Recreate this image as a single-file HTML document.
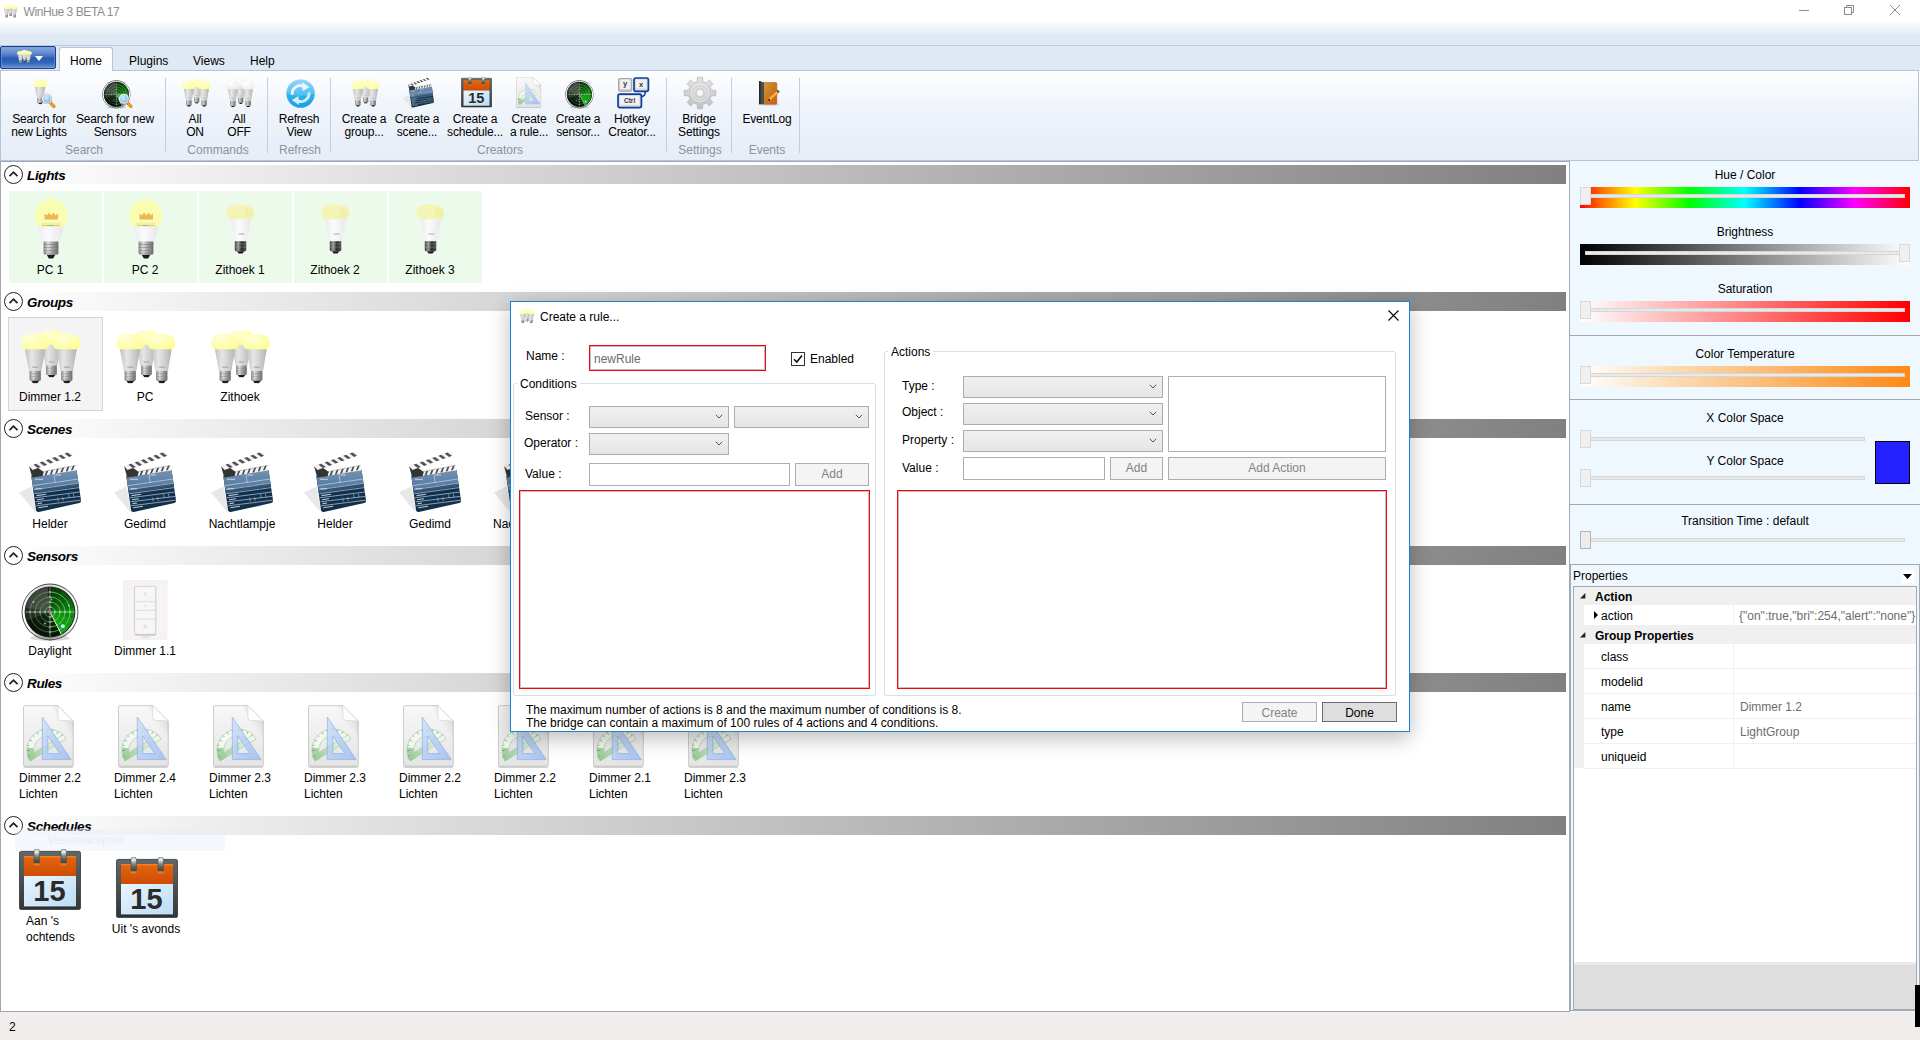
<!DOCTYPE html>
<html lang="en">
<head>
<meta charset="utf-8">
<title>WinHue 3 BETA 17</title>
<style>
*{box-sizing:border-box;margin:0;padding:0}
html,body{width:1920px;height:1040px;overflow:hidden;background:#fff}
body{font-family:"Liberation Sans",sans-serif;font-size:12px;color:#000;position:relative}
.a{position:absolute}
.t{position:absolute;white-space:nowrap;line-height:16px;font-size:12px}
.c{text-align:center}
svg{position:absolute;overflow:visible}
/* title + ribbon */
#titlebar{left:0;top:0;width:1920px;height:46px;background:linear-gradient(#fff 0,#fff 20px,#dfe9f5 36px,#dfe9f5 46px)}
#tabrow{left:0;top:45px;width:1920px;height:26px;background:#dfe9f5;border-top:1px solid #b9c9de}
#ribbon{left:0;top:70px;width:1919px;height:91px;border:1px solid #b4c4da;background:linear-gradient(#fdfeff 0,#f0f4fb 40%,#e6edf7 100%)}
#appbtn{left:0;top:46px;width:56px;height:23px;border:1px solid #1b3f8a;border-radius:2px;background:linear-gradient(#86a6dc 0,#6c93d2 22%,#4273c4 45%,#2c5cb4 52%,#3065bc 75%,#6f95ce 100%);box-shadow:inset 0 0 0 1px rgba(120,160,220,.5)}
#hometab{left:59px;top:47px;width:54px;height:24px;border:1px solid #b4c4da;border-bottom:none;border-radius:3px 3px 0 0;background:linear-gradient(#fff,#fbfcfe)}
.rsep{position:absolute;top:78px;width:1px;height:75px;background:#c3cfe0}
.rl{position:absolute;white-space:nowrap;line-height:13px;font-size:12px;text-align:center;top:113px;transform:translateX(-50%);letter-spacing:-.2px}
.gl{position:absolute;white-space:nowrap;line-height:16px;font-size:12px;color:#8b929c;top:142px;transform:translateX(-50%)}
/* left panel */
#left{left:0;top:161px;width:1570px;height:851px;border:1px solid #a3a7b2;background:#fff}
.hdr{position:absolute;left:2px;width:1564px;height:19px;background:linear-gradient(90deg,#fff 0,#808080 100%)}
.hc{position:absolute;left:4px;width:19px;height:19px;border:1px solid #222;border-radius:50%;background:#fff}
.ht{position:absolute;left:27px;font-weight:bold;font-style:italic;font-size:13.5px;letter-spacing:-.35px;line-height:19px;white-space:nowrap;margin-top:1px}
.tile{position:absolute;width:93px;height:92px;top:191px;background:#ebfaeb}
.il{position:absolute;white-space:nowrap;line-height:16px;font-size:12px;transform:translateX(-50%);text-align:center}
/* right panel */
#right{left:1570px;top:161px;width:350px;height:851px;background:#f0f8ff}
.sl{position:absolute;left:1570px;width:350px;text-align:center;line-height:16px;font-size:12px}
.bar{position:absolute;left:1580px;width:330px;height:21px}
.trk{position:absolute;height:4px;background:#e7eaea;border:1px solid #d6d6d6}
.thumb{position:absolute;width:11px;height:18px;background:#f0f0f0;border:1px solid #d9d9d9}
.div{position:absolute;left:1570px;width:350px;height:1px;background:#a5a8ad}
.pr{position:absolute;left:1584px;width:332px;height:25px;background:#fff;border-bottom:1px solid #f0f0f0}
.pn{position:absolute;left:1601px;line-height:16px;font-size:12px;white-space:nowrap}
.pv{position:absolute;left:1740px;line-height:16px;font-size:12px;white-space:nowrap;color:#6d6d6d}
/* dialog */
#dlg{left:510px;top:301px;width:900px;height:431px;background:#fff;border:1px solid #1883d7;box-shadow:0 6px 20px rgba(0,0,0,.27)}
.gb{position:absolute;border:1px solid #d5dfe5;border-radius:2.5px}
.gbl{position:absolute;background:#fff;padding:0 3px;line-height:16px;font-size:12px;white-space:nowrap}
.cb{position:absolute;height:22px;border:1px solid #adadad;background:linear-gradient(#f0f0f0,#e5e5e5)}
.tb{position:absolute;border:1px solid #abadb3;background:#fff}
.btn{position:absolute;border:1px solid #adadad;background:#f4f4f4;color:#838383;text-align:center;font-size:12px;line-height:21px}
.red{position:absolute;border:1px solid #f00;background:#fff;box-shadow:inset 0 0 0 1px #b5c6cc}
</style>
</head>
<body>
<!--DEFS-->
<svg width="0" height="0" style="left:0;top:0">
<defs>
<linearGradient id="gBody" x1="0" x2="1"><stop offset="0" stop-color="#c0c0c0"/><stop offset=".35" stop-color="#e6e6e6"/><stop offset=".6" stop-color="#d4d4d4"/><stop offset="1" stop-color="#b2b2b2"/></linearGradient>
<linearGradient id="gBodyW" x1="0" x2="1"><stop offset="0" stop-color="#ececf0"/><stop offset=".4" stop-color="#fbfbfd"/><stop offset="1" stop-color="#e6e6ec"/></linearGradient>
<linearGradient id="gScrew" x1="0" x2="1"><stop offset="0" stop-color="#858585"/><stop offset=".3" stop-color="#e0e0e0"/><stop offset=".6" stop-color="#a4a4a4"/><stop offset="1" stop-color="#6e6e6e"/></linearGradient>
<linearGradient id="gScrewD" x1="0" x2="1"><stop offset="0" stop-color="#3c3c3c"/><stop offset=".3" stop-color="#9a9a9a"/><stop offset=".6" stop-color="#2a2a2a"/><stop offset="1" stop-color="#555"/></linearGradient>
<radialGradient id="gDome" cx=".35" cy=".3" r=".8"><stop offset="0" stop-color="#ffffd6"/><stop offset="1" stop-color="#fdfd96"/></radialGradient>
<radialGradient id="gDomeW" cx=".35" cy=".3" r=".8"><stop offset="0" stop-color="#fff"/><stop offset="1" stop-color="#ececec"/></radialGradient>
<symbol id="hb" viewBox="0 -1 28 50">
<path d="M3.7 14 L24.3 14 L20.3 36.6 L8 36.6Z" fill="url(#gBody)"/>
<path d="M8.6 36.4H19.8V45.2Q19.8 46.3 18.6 46.3H9.8Q8.6 46.3 8.6 45.2Z" fill="url(#gScrew)"/>
<path d="M8.6 39.2H19.8M8.6 42H19.8M8.6 44.6H19.8" stroke="#777" stroke-width=".6" opacity=".6"/>
<path d="M10.3 46.2H18.2L16.4 48.7H12.1Z" fill="#1c1c1c"/>
<path d="M11.3 32.6H17.2" stroke="#999" stroke-width=".9"/>
<path class="dm" d="M.3 8.6C.3 2.2 5 -.7 14 -.7S27.7 2.2 27.7 8.6C27.7 11.4 26.4 13.6 24.3 14.6L3.7 14.6C1.6 13.6 .3 11.4 .3 8.6Z" fill="url(#gDome)"/>
</symbol>
<symbol id="hbw" viewBox="0 -1 28 50">
<path d="M3.7 14 L24.3 14 L20.3 36.6 L8 36.6Z" fill="url(#gBody)"/>
<path d="M8.6 36.4H19.8V45.2Q19.8 46.3 18.6 46.3H9.8Q8.6 46.3 8.6 45.2Z" fill="url(#gScrew)"/>
<path d="M8.6 39.2H19.8M8.6 42H19.8M8.6 44.6H19.8" stroke="#777" stroke-width=".6" opacity=".6"/>
<path d="M10.3 46.2H18.2L16.4 48.7H12.1Z" fill="#1c1c1c"/>
<path d="M11.3 32.6H17.2" stroke="#999" stroke-width=".9"/>
<path d="M.3 8.6C.3 2.2 5 -.7 14 -.7S27.7 2.2 27.7 8.6C27.7 11.4 26.4 13.6 24.3 14.6L3.7 14.6C1.6 13.6 .3 11.4 .3 8.6Z" fill="url(#gDomeW)"/>
</symbol>
<symbol id="g3" viewBox="0 0 60 54">
<use href="#hb" x="16.85" y="-.1" width="26.75" height="47.75"/>
<use href="#hb" x="0" y="3.6" width="28" height="50"/>
<use href="#hb" x="31.6" y="3.6" width="28" height="50"/>
</symbol>
<symbol id="g3w" viewBox="0 0 60 54">
<use href="#hbw" x="16.85" y="-.1" width="26.75" height="47.75"/>
<use href="#hbw" x="0" y="3.6" width="28" height="50"/>
<use href="#hbw" x="31.6" y="3.6" width="28" height="50"/>
</symbol>
<symbol id="zb" viewBox="0 0 29 50">
<path d="M4.5 14.5 L25.3 14.5 L20.8 37.4 L8.3 37.4Z" fill="url(#gBodyW)"/>
<path d="M12.5 30H18.5" stroke="#999" stroke-width=".8"/>
<path d="M8.8 37.2H20.3V46Q20.3 47.3 19 47.3H10.1Q8.8 47.3 8.8 46Z" fill="url(#gScrewD)"/>
<path d="M8.8 40H20.3M8.8 43H20.3" stroke="#ccc" stroke-width=".6" opacity=".5"/>
<path d="M11 47.2H18.2L16.6 49.6H12.6Z" fill="#181818"/>
<path d="M.3 9C.3 3 5 .2 14.5 .2S28.5 3 28.5 9C28.5 12 27 14.2 25 15.2L4.3 15.2C2 14.2 .3 12 .3 9Z" fill="#f4f4b5"/>
<path d="M19 3C24 3.5 27 5.5 27.4 9C27.4 11 26.5 13 25 14H19Z" fill="#eeeeaa" opacity=".7"/>
</symbol>
<symbol id="gl" viewBox="0 0 34 60">
<circle cx="16.8" cy="16.6" r="16.6" fill="#f8fdb1"/>
<path d="M10.5 20.5V14.5L13 16.5L15 13.5L17.3 16.5L19.5 13.5L21.5 16.5L24 14.5V20.5Z" fill="#efb553"/>
<rect x="7" y="23.5" width="19.5" height="3.2" fill="#efefa8"/>
<path d="M8 26.7H25.5" stroke="#e9c060" stroke-width="1"/>
<path d="M13.5 26.7H19.5" stroke="#7fbf8f" stroke-width="1"/>
<path d="M4.6 27.4L29 27.4C28.8 33 27.3 38.5 24.6 42.8L9.4 42.8C6.6 38.5 4.8 33 4.6 27.4Z" fill="url(#gBodyW)"/>
<path d="M9.6 42.6H24.4V54Q24.4 55.8 22.8 55.8H11.2Q9.6 55.8 9.6 54Z" fill="url(#gScrew)"/>
<path d="M9.6 45.5H24.4M9.6 48.5H24.4M9.6 51.5H24.4M9.6 54H24.4" stroke="#666" stroke-width=".7" opacity=".55"/>
<path d="M12.8 55.7H21.2L19.2 59.6H14.8Z" fill="#1a1a1a"/>
</symbol>
<!--D2-->
<linearGradient id="gClapTop" x1="0" y1="0" x2="0" y2="1"><stop offset="0" stop-color="#7092b4"/><stop offset="1" stop-color="#54789e"/></linearGradient>
<symbol id="clap" viewBox="0 0 75 70">
<path d="M4 47.5L16.5 41.5L21.5 66.5L18.5 65Z" fill="#e4e4e4" opacity=".85"/>
<path d="M16.3 31L61.5 24.5L66 55.5Q66.3 57.6 64.3 58.1L23.7 67Q21.6 67.4 21.1 65.3Z" fill="#11304e"/>
<path d="M16.3 31L61.5 24.5L63.4 38L18.3 44.6Z" fill="url(#gClapTop)"/>
<path d="M18.3 44.6L63.4 38L63.9 41.6L18.9 48.4Z" fill="#2f5379"/>
<path d="M18.0 40.6L63.2 34.0" stroke="#d4dee8" stroke-width=".8" opacity=".8"/>
<path d="M18.8 44.7L63.6 38.2" stroke="#d4dee8" stroke-width=".8" opacity=".8"/>
<path d="M19.4 48.8L64.1 42.6" stroke="#d4dee8" stroke-width=".8" opacity=".8"/>
<path d="M20.0 52.8L64.7 47.0" stroke="#d4dee8" stroke-width=".8" opacity=".8"/>
<path d="M20.6 56.8L65.2 51.4" stroke="#d4dee8" stroke-width=".8" opacity=".8"/>
<path d="M21.2 60.8L65.7 55.2" stroke="#d4dee8" stroke-width=".8" opacity=".8"/>
<path d="M38.7 28L40.3 38" stroke="#d4dee8" stroke-width=".8" opacity=".8"/>
<path d="M42.6 52.7L43.3 56.6M47.6 52L48.3 55.9M53.6 49.2L54.2 53M58.4 48.5L59 52.3" stroke="#d4dee8" stroke-width=".7" opacity=".7"/>
<path d="M20 34.2H28M40.5 30H46M20.5 43.8H27M21.5 50.6L31 49.2M22 54.8L29 53.8M22.6 58.6L27 58M23.2 62.8L33 61.2" stroke="#e8eef4" stroke-width="1.1" opacity=".8"/>
<path d="M27.5 26.8L60.6 20.3L62 25.2L28 30.8Z" fill="#f6f6f6"/>
<path d="M31.3 26.1L33.3 25.7L31.4 30.4L29.4 30.7Z" fill="#4a4a48"/>
<path d="M36.6 25.0L38.6 24.6L36.7 29.3L34.7 29.7Z" fill="#4a4a48"/>
<path d="M41.9 24.0L43.9 23.6L42.0 28.3L40.0 28.7Z" fill="#4a4a48"/>
<path d="M47.2 22.9L49.2 22.5L47.3 27.2L45.3 27.6Z" fill="#4a4a48"/>
<path d="M52.5 21.9L54.5 21.5L52.6 26.2L50.6 26.6Z" fill="#4a4a48"/>
<path d="M57.8 20.9L59.8 20.5L57.9 25.1L55.9 25.5Z" fill="#4a4a48"/>
<path d="M27.5 26.8L60.6 20.3" stroke="#777" stroke-width=".6" opacity=".7"/>
<path d="M14.2 21.6L19 20L28.8 27L27.4 31L17.2 32.4Z" fill="#343434"/>
<path d="M14.2 21.3L55.8 6.3L58.5 10.3L17.5 25Z" fill="#f4f4f4"/>
<path d="M18.4 19.8L21.3 18.8L25.8 22.0L22.9 23.1Z" fill="#505250"/>
<path d="M24.6 17.6L27.5 16.5L32.1 19.8L29.2 20.9Z" fill="#505250"/>
<path d="M30.8 15.3L33.8 14.2L38.3 17.6L35.4 18.6Z" fill="#505250"/>
<path d="M37.1 13.1L40.0 12.0L44.6 15.3L41.6 16.3Z" fill="#505250"/>
<path d="M43.3 10.8L46.2 9.8L50.8 13.1L47.9 14.1Z" fill="#505250"/>
<path d="M49.6 8.6L52.5 7.5L57.0 10.8L54.1 11.9Z" fill="#505250"/>
</symbol>
<radialGradient id="gRad" cx=".5" cy=".5" r=".5"><stop offset="0" stop-color="#10300f"/><stop offset="1" stop-color="#071307"/></radialGradient>
<linearGradient id="gRing" x1="0" y1="0" x2="0" y2="1"><stop offset="0" stop-color="#8a8a8a"/><stop offset=".5" stop-color="#fff"/><stop offset="1" stop-color="#6a6a6a"/></linearGradient>
<linearGradient id="gRing2" x1="0" y1="0" x2="0" y2="1"><stop offset="0" stop-color="#d8d8d8"/><stop offset=".3" stop-color="#fff"/><stop offset=".8" stop-color="#fff"/><stop offset="1" stop-color="#9a9a9a"/></linearGradient>
<symbol id="radar" viewBox="0 0 58 58">
<ellipse cx="29" cy="55" rx="20" ry="3" fill="#000" opacity=".15"/>
<circle cx="29" cy="29" r="28.4" fill="#4a4a4a"/>
<circle cx="29" cy="29" r="27.5" fill="url(#gRing2)"/>
<circle cx="29" cy="29" r="25.4" fill="#2a2a2a"/>
<circle cx="29" cy="29" r="24.6" fill="url(#gRad)"/>
<path d="M29 29L31.14 4.49A24.6 24.6 0 0 1 41.52 7.83Z" fill="#18a418" opacity="0.30"/>
<path d="M29 29L41.30 7.70A24.6 24.6 0 0 1 49.30 15.10Z" fill="#18a418" opacity="0.45"/>
<path d="M29 29L49.15 14.89A24.6 24.6 0 0 1 53.27 24.98Z" fill="#18a418" opacity="0.60"/>
<path d="M29 29L53.23 24.73A24.6 24.6 0 0 1 52.69 35.62Z" fill="#18a418" opacity="0.78"/>
<path d="M29 29L52.76 35.37A24.6 24.6 0 0 1 47.68 45.01Z" fill="#18a418" opacity="0.92"/>
<path d="M29 29L47.84 44.81A24.6 24.6 0 0 1 39.94 51.03Z" fill="#18a418" opacity="1.00"/>
<path d="M29 29L4.77 24.73A24.6 24.6 0 0 1 26.86 4.49Z" fill="#fff" opacity=".22"/>
<path d="M29 29L5.88 37.41A24.6 24.6 0 0 1 4.77 24.73Z" fill="#fff" opacity=".10"/>
<path d="M29 24 A5 5 0 0 0 29 34" fill="none" stroke="#dfe8df" stroke-width=".8" opacity=".38"/>
<path d="M29 24 A5 5 0 0 1 29 34" fill="none" stroke="#56e856" stroke-width=".9" opacity=".8"/>
<path d="M29 19 A10 10 0 0 0 29 39" fill="none" stroke="#dfe8df" stroke-width=".8" opacity=".38"/>
<path d="M29 19 A10 10 0 0 1 29 39" fill="none" stroke="#56e856" stroke-width=".9" opacity=".8"/>
<path d="M29 14 A15 15 0 0 0 29 44" fill="none" stroke="#dfe8df" stroke-width=".8" opacity=".38"/>
<path d="M29 14 A15 15 0 0 1 29 44" fill="none" stroke="#56e856" stroke-width=".9" opacity=".8"/>
<path d="M29 9 A20 20 0 0 0 29 49" fill="none" stroke="#dfe8df" stroke-width=".8" opacity=".38"/>
<path d="M29 9 A20 20 0 0 1 29 49" fill="none" stroke="#56e856" stroke-width=".9" opacity=".8"/>
<path d="M4.5 29H53.5M29 4.5V53.5" stroke="#fff" stroke-width=".7" opacity=".7"/>
<path d="M9.0 27.6V30.4M27.6 9.0H30.4M14.0 27.6V30.4M27.6 14.0H30.4M19.0 27.6V30.4M27.6 19.0H30.4M24.0 27.6V30.4M27.6 24.0H30.4M34.0 27.6V30.4M27.6 34.0H30.4M39.0 27.6V30.4M27.6 39.0H30.4M44.0 27.6V30.4M27.6 44.0H30.4M49.0 27.6V30.4M27.6 49.0H30.4" stroke="#fff" stroke-width=".7" opacity=".8"/>
<path d="M29 29L40.17 50.92" stroke="#dff5df" stroke-width="1"/>
<circle cx="41.8" cy="43.2" r="1.9" fill="#c8ecff"/>
<circle cx="12.5" cy="19" r="1" fill="#cfd8cf" opacity=".7"/><circle cx="24" cy="40.5" r="1.1" fill="#9fc8e8" opacity=".8"/><circle cx="30.5" cy="16.5" r=".9" fill="#9fc8e8" opacity=".8"/><circle cx="48" cy="22.5" r="1" fill="#b8e0b8" opacity=".8"/>
<circle cx="29" cy="29" r="1.6" fill="#e8a0b8"/><circle cx="29" cy="29" r=".7" fill="#702040"/>
</symbol>
<symbol id="dim" viewBox="0 0 45 60">
<rect x=".3" y=".3" width="44.4" height="59.4" rx="1" fill="#f8f3f3" stroke="#ece6e6" stroke-width=".6"/>
<rect x="12" y="7" width="21.4" height="49" rx="1.6" fill="#c9c9c9"/>
<rect x="11.6" y="6" width="21.6" height="48.6" rx="1.6" fill="#f6f6f6" stroke="#c6c6c6" stroke-width=".8"/>
<path d="M11.6 21.6H33.2M11.6 30.4H33.2M11.6 39.2H33.2" stroke="#d6d6d6" stroke-width=".8"/>
<path d="M22.4 12.2V15" stroke="#b8b8b8" stroke-width=".7"/><circle cx="22.4" cy="25.8" r=".7" fill="#c4c4c4"/><circle cx="22.4" cy="34.8" r=".5" fill="#c8c8c8"/><ellipse cx="22.4" cy="46.6" rx="1.5" ry="1.1" fill="none" stroke="#bdbdbd" stroke-width=".6"/>
<path d="M18.5 57.4H26.5" stroke="#c8c0c0" stroke-width=".7"/>
</symbol>
<linearGradient id="gPage" x1="0" y1="0" x2="0" y2="1"><stop offset="0" stop-color="#f8f8f8"/><stop offset="1" stop-color="#e4e4e4"/></linearGradient>
<linearGradient id="gFoldSh" x1="1" y1="0" x2="0" y2="1"><stop offset="0" stop-color="#000" stop-opacity=".18"/><stop offset=".6" stop-color="#000" stop-opacity="0"/></linearGradient>
<linearGradient id="gTri" x1="0" y1="0" x2="1" y2="1"><stop offset="0" stop-color="#cfe2fa"/><stop offset="1" stop-color="#9dbdf0"/></linearGradient>
<symbol id="rule" viewBox="0 0 52 63">
<path d="M2 1H35L50.4 16.4V60Q50.4 62 48.4 62H2.4Q.4 62 .4 60V2.6Q.4 1 2 1Z" fill="#9a9a9a" opacity=".45" transform="translate(0 .9)"/>
<path d="M2 .6H34.8L50.2 16V59.6Q50.2 61.2 48.6 61.2H2Q.5 61.2 .5 59.6V2Q.5 .6 2 .6Z" fill="url(#gPage)" stroke="#c4c4c4" stroke-width=".8"/>
<path d="M34.8 .6L50.2 16V30H30V.6Z" fill="url(#gFoldSh)"/>
<path d="M34.8 .6V12.4Q34.8 15.4 37.8 15.4L50.2 16Z" fill="#fdfdfd" stroke="#cfcfcf" stroke-width=".6"/>
<path d="M7.08 55.95A21 21 0 0 1 42.92 34.05L37.37 37.44A14.5 14.5 0 0 0 12.63 52.56Z" fill="#f3f8f0" stroke="#a9cfa6" stroke-width=".7"/>
<path d="M7.08 55.95A21 21 0 0 1 4.14 42.60L10.60 43.34A14.5 14.5 0 0 0 12.63 52.56Z" fill="#9ccd9a" opacity=".9"/>
<linearGradient id="gBar" gradientUnits="userSpaceOnUse" x1="7.1" y1="56.0" x2="42.9" y2="34.0"><stop offset="0" stop-color="#93c891"/><stop offset=".55" stop-color="#cfe6cc"/><stop offset="1" stop-color="#f4f8f2"/></linearGradient>
<path d="M7.08 55.95L42.92 34.05L40.21 29.61L4.37 51.51Z" fill="url(#gBar)" stroke="#a9cfa6" stroke-width=".6"/>
<path d="M4.9 50.9L6.8 50.4M4.0 45.5L7.0 45.4M4.6 40.1L6.5 40.5M6.6 35.0L9.2 36.4M9.8 30.5L11.2 31.9M14.0 27.1L15.6 29.6M19.1 24.9L19.6 26.8M24.5 24.0L24.6 27.0M29.9 24.6L29.5 26.5M35.0 26.6L33.6 29.2M39.5 29.8L38.1 31.2" stroke="#6a8f68" stroke-width=".6"/>
<path d="M19.3 12V54.6H48.2ZM24.8 31V48.6H36.8Z" fill="url(#gTri)" fill-rule="evenodd" opacity=".85" stroke="#7fa6e6" stroke-width=".7"/>
</symbol>
<linearGradient id="gFrame" x1="0" y1="0" x2="0" y2="1"><stop offset="0" stop-color="#626868"/><stop offset="1" stop-color="#333636"/></linearGradient>
<linearGradient id="gOr" x1="0" y1="0" x2="0" y2="1"><stop offset="0" stop-color="#f58a22"/><stop offset=".12" stop-color="#e3620e"/><stop offset="1" stop-color="#cc4c04"/></linearGradient>
<linearGradient id="gPg" x1="0" y1="0" x2="1" y2="1"><stop offset="0" stop-color="#e9f5fd"/><stop offset="1" stop-color="#bcdcf4"/></linearGradient>
<linearGradient id="gRg" x1="0" y1="0" x2="0" y2="1"><stop offset="0" stop-color="#c4ccc6"/><stop offset=".2" stop-color="#e4f0e4"/><stop offset=".42" stop-color="#8a9494"/><stop offset=".65" stop-color="#596161"/><stop offset="1" stop-color="#363c3c"/></linearGradient>
<symbol id="cal" viewBox="0 0 62 61">
<rect x=".4" y="2.4" width="61.2" height="58.2" rx="2" fill="url(#gFrame)" stroke="#2c2e2e" stroke-width=".8"/>
<rect x="5" y="7" width="52" height="20.2" fill="url(#gOr)"/>
<rect x="5" y="27" width="52" height="31" fill="url(#gPg)"/>
<path d="M5 58H57" stroke="#1a1a1a" stroke-width="1"/>
<text x="30.4" y="52.4" text-anchor="middle" font-family="Liberation Sans, sans-serif" font-weight="bold" font-size="29" fill="#2a2c2c">15</text>
<rect x="15" y="0" width="5.4" height="15.4" rx="2.6" fill="url(#gRg)" stroke="#3a4040" stroke-width=".5"/>
<ellipse cx="17.7" cy="15.2" rx="3.2" ry="1.2" fill="#f39a2a" opacity=".7"/>
<rect x="42" y="0" width="5.4" height="15.4" rx="2.6" fill="url(#gRg)" stroke="#3a4040" stroke-width=".5"/>
<ellipse cx="44.7" cy="15.2" rx="3.2" ry="1.2" fill="#f39a2a" opacity=".7"/>
</symbol>
<radialGradient id="gLens" cx=".4" cy=".35" r=".7"><stop offset="0" stop-color="#d6ecfc"/><stop offset="1" stop-color="#79b8ee"/></radialGradient>
<symbol id="mag" viewBox="0 0 15 16">
<path d="M9.3 9.6L12.8 13.4" stroke="#c87410" stroke-width="3.2" stroke-linecap="round"/>
<path d="M9.3 9.6L12.8 13.4" stroke="#f6a02a" stroke-width="2.2" stroke-linecap="round"/>
<circle cx="5.8" cy="5.8" r="5.3" fill="#9a9a9a"/>
<circle cx="5.8" cy="5.8" r="4.9" fill="#f2f2f2"/>
<circle cx="5.8" cy="5.8" r="3.9" fill="url(#gLens)"/>
</symbol>
<linearGradient id="gRef" x1="0" y1="0" x2="0" y2="1"><stop offset="0" stop-color="#7fcdf5"/><stop offset=".5" stop-color="#2fb4f0"/><stop offset="1" stop-color="#1b9fe2"/></linearGradient>
<symbol id="refresh" viewBox="-15 -15 30 30">
<circle cx="0" cy="0" r="14.6" fill="url(#gRef)"/>
<path d="M-14.6 0A14.6 14.6 0 0 1 14.6 0Q0 5 -14.6 0Z" fill="#fff" opacity=".18"/>
<path d="M-8.6 1.2A8.3 8.3 0 0 1 3.5 -7.2" fill="none" stroke="#eaf6fd" stroke-width="3"/>
<path d="M1.8 -11.8L9 -6.6L2 -2.6Z" fill="#eaf6fd"/>
<path d="M8.6 -1.2A8.3 8.3 0 0 1 -3.5 7.2" fill="none" stroke="#d5edfb" stroke-width="3"/>
<path d="M-1.8 11.8L-9 6.6L-2 2.6Z" fill="#d5edfb"/>
</symbol>
<linearGradient id="gGear" x1="0" y1="0" x2="0" y2="1"><stop offset="0" stop-color="#e2e2e2"/><stop offset="1" stop-color="#c2c2c2"/></linearGradient>
<symbol id="gear" viewBox="-17 -17 34 34">
<path d="M-2.75 -11.47L-2.64 -15.78L2.64 -15.78L2.75 -11.47L6.17 -10.06L9.29 -13.03L13.03 -9.29L10.06 -6.17L11.47 -2.75L15.78 -2.64L15.78 2.64L11.47 2.75L10.06 6.17L13.03 9.29L9.29 13.03L6.17 10.06L2.75 11.47L2.64 15.78L-2.64 15.78L-2.75 11.47L-6.17 10.06L-9.29 13.03L-13.03 9.29L-10.06 6.17L-11.47 2.75L-15.78 2.64L-15.78 -2.64L-11.47 -2.75L-10.06 -6.17L-13.03 -9.29L-9.29 -13.03L-6.17 -10.06Z" fill="url(#gGear)" stroke="#b4b4b4" stroke-width=".7" stroke-linejoin="round"/>
<circle r="8.3" fill="none" stroke="#f2f2f2" stroke-width="1"/><circle r="6.2" fill="none" stroke="#eee" stroke-width=".9"/><circle r="7.2" fill="none" stroke="#bdbdbd" stroke-width=".6"/>
<circle r="3.5" fill="#f7f9fc" stroke="#c8c8c8" stroke-width=".7"/>
</symbol>
<linearGradient id="gBook" x1="0" y1="0" x2="1" y2="1"><stop offset="0" stop-color="#d8983a"/><stop offset=".5" stop-color="#c8791f"/><stop offset="1" stop-color="#c8601a"/></linearGradient>
<symbol id="book" viewBox="0 0 24 26">
<ellipse cx="11" cy="24.6" rx="11" ry="1.2" fill="#000" opacity=".12"/>
<rect x="5.6" y="2.6" width="13.2" height="21.6" rx=".8" fill="url(#gBook)" stroke="#c4501a" stroke-width=".6"/>
<path d="M1 1.4Q1 .8 1.6 1L6 2.6V24.2H1.6Q1 24.2 1 23.6Z" fill="#4a4e4c"/>
<path d="M1 1.4Q1 .8 1.6 1L2.6 1.4V24.2H1.6Q1 24.2 1 23.6Z" fill="#252926"/>
<path d="M11.6 19.4L20 11.4" stroke="#d8841a" stroke-width="3"/>
<path d="M11.6 19.4L20 11.4" stroke="#ffb24a" stroke-width="2"/>
<path d="M19.4 12L20.8 10.6" stroke="#5a5a5a" stroke-width="3"/>
<circle cx="11.2" cy="19.8" r=".9" fill="#111"/>
</symbol>
<symbol id="hot" viewBox="0 0 33 32">
<rect x="1.6" y="1.6" width="13.2" height="12.6" rx="1" fill="#d0d0d0" stroke="#8a8a8a" stroke-width=".8"/>
<rect x="3" y="2.6" width="10.4" height="9.4" rx=".8" fill="#f0f0f0"/>
<text x="8.2" y="9.4" text-anchor="middle" font-family="Liberation Sans, sans-serif" font-weight="bold" font-size="7.6" fill="#3a3a3a">y</text>
<path d="M28.2 14.6Q28.6 19.6 24 19.6" fill="none" stroke="#0d3e9a" stroke-width="1.5"/>
<rect x="17" y="1" width="14.4" height="13.4" rx="1.8" fill="#d8d8d8" stroke="#0d3e9a" stroke-width="1.7"/>
<rect x="19" y="2.8" width="10.4" height="8.8" rx=".8" fill="#f2f2f2"/>
<text x="24.2" y="9.6" text-anchor="middle" font-family="Liberation Sans, sans-serif" font-weight="bold" font-size="7.6" fill="#3a3a3a">x</text>
<rect x="1" y="17.2" width="23.4" height="13.4" rx="1.8" fill="#d8d8d8" stroke="#0d3e9a" stroke-width="1.7"/>
<rect x="3" y="19" width="19.4" height="8.8" rx=".8" fill="#f2f2f2"/>
<text x="12.6" y="25.8" text-anchor="middle" font-family="Liberation Sans, sans-serif" font-weight="bold" font-size="6.6" fill="#3a3a3a">Ctrl</text>
</symbol>
<!--/D2-->
</defs>
</svg>
<!--/DEFS-->
<!--TITLE-->
<div class="a" id="titlebar"></div>
<div class="t" style="left:23.5px;top:4px;color:#8c8c8c;letter-spacing:-.42px">WinHue 3 BETA 17</div>
<div class="a" id="tabrow"></div>
<div class="a" id="ribbon"></div>
<div class="a" id="appbtn"></div>
<div class="a" id="hometab"></div>
<div class="t" style="left:70px;top:53px">Home</div>
<div class="t" style="left:129px;top:53px">Plugins</div>
<div class="t" style="left:193px;top:53px">Views</div>
<div class="t" style="left:250px;top:53px">Help</div>
<!--RIBBON-->
<div class="rl" style="left:39px">Search for<br>new Lights</div>
<div class="rl" style="left:115px">Search for new<br>Sensors</div>
<div class="rl" style="left:195px">All<br>ON</div>
<div class="rl" style="left:239px">All<br>OFF</div>
<div class="rl" style="left:299px">Refresh<br>View</div>
<div class="rl" style="left:364px">Create a<br>group...</div>
<div class="rl" style="left:417px">Create a<br>scene...</div>
<div class="rl" style="left:475px">Create a<br>schedule...</div>
<div class="rl" style="left:529px">Create<br>a rule...</div>
<div class="rl" style="left:578px">Create a<br>sensor...</div>
<div class="rl" style="left:632px">Hotkey<br>Creator...</div>
<div class="rl" style="left:699px">Bridge<br>Settings</div>
<div class="rl" style="left:767px">EventLog</div>
<div class="gl" style="left:84px">Search</div>
<div class="gl" style="left:218px">Commands</div>
<div class="gl" style="left:300px">Refresh</div>
<div class="gl" style="left:500px">Creators</div>
<div class="gl" style="left:700px">Settings</div>
<div class="gl" style="left:767px">Events</div>
<div class="rsep" style="left:165px"></div>
<div class="rsep" style="left:267px"></div>
<div class="rsep" style="left:330px"></div>
<div class="rsep" style="left:666px"></div>
<div class="rsep" style="left:731px"></div>
<div class="rsep" style="left:799px"></div>
<!--RIBBONICONS-->
<svg style="left:3px;top:4px" width="15" height="14"><use href="#g3"/></svg>
<svg style="left:16.6px;top:50.4px" width="15" height="13.6"><use href="#g3"/></svg>
<svg style="left:35px;top:56px" width="8" height="5" viewBox="0 0 8 5"><path d="M0 0H8L4 5Z" fill="#fff"/></svg>
<svg style="left:33px;top:78.8px" width="14.3" height="25.5"><use href="#hb"/></svg>
<svg style="left:41px;top:93.4px" width="15" height="16"><use href="#mag"/></svg>
<svg style="left:102.2px;top:79.7px" width="28.8" height="28.8"><use href="#radar"/></svg>
<svg style="left:117.7px;top:92.8px" width="15" height="16"><use href="#mag"/></svg>
<svg style="left:182px;top:79.4px" width="29" height="28" viewBox="0 0 60 54" preserveAspectRatio="none"><use href="#g3" width="60" height="54"/></svg>
<svg style="left:226px;top:78.8px" width="29" height="28.6" viewBox="0 0 60 54" preserveAspectRatio="none"><use href="#g3w" width="60" height="54"/></svg>
<svg style="left:286px;top:78.6px" width="29.2" height="29.2"><use href="#refresh"/></svg>
<svg style="left:351px;top:79.4px" width="29" height="28" viewBox="0 0 60 54" preserveAspectRatio="none"><use href="#g3" width="60" height="54"/></svg>
<svg style="left:401px;top:74px" width="37.5" height="35"><use href="#clap"/></svg>
<svg style="left:461px;top:77px" width="31" height="30.5"><use href="#cal"/></svg>
<svg style="left:516.4px;top:77.3px" width="25.8" height="31.2"><use href="#rule"/></svg>
<svg style="left:565px;top:79.8px" width="28.8" height="28.8"><use href="#radar"/></svg>
<svg style="left:616.5px;top:76.5px" width="33" height="32"><use href="#hot"/></svg>
<svg style="left:683px;top:76px" width="34" height="34"><use href="#gear"/></svg>
<svg style="left:758px;top:80px" width="24" height="26"><use href="#book"/></svg>
<svg style="left:1799px;top:10px" width="10" height="1"><rect width="10" height="1" fill="#8a8a8a"/></svg>
<svg style="left:1844px;top:5px" width="10" height="10" viewBox="0 0 10 10"><path d="M2.5 2.5V.5H9.5V7.5H7.5" fill="none" stroke="#8a8a8a"/><rect x=".5" y="2.5" width="7" height="7" fill="none" stroke="#8a8a8a"/></svg>
<svg style="left:1890px;top:5px" width="10" height="10" viewBox="0 0 10 10"><path d="M0 0L10 10M10 0L0 10" stroke="#8a8a8a" stroke-width="1" fill="none"/></svg>
<!--/RIBBONICONS-->
<!--LEFT-->
<div class="a" id="left"></div>
<!--LEFTCONTENT-->
<div class="hdr" style="top:165px"></div>
<div class="hc" style="top:165px"></div>
<svg style="left:8px;top:170px" width="11" height="8" viewBox="0 0 11 8"><path d="M1.5 6.2 L5.5 2.2 L9.5 6.2" fill="none" stroke="#222" stroke-width="1.8"/></svg>
<div class="ht" style="top:165px">Lights</div>
<div class="hdr" style="top:292px"></div>
<div class="hc" style="top:292px"></div>
<svg style="left:8px;top:297px" width="11" height="8" viewBox="0 0 11 8"><path d="M1.5 6.2 L5.5 2.2 L9.5 6.2" fill="none" stroke="#222" stroke-width="1.8"/></svg>
<div class="ht" style="top:292px">Groups</div>
<div class="hdr" style="top:419px"></div>
<div class="hc" style="top:419px"></div>
<svg style="left:8px;top:424px" width="11" height="8" viewBox="0 0 11 8"><path d="M1.5 6.2 L5.5 2.2 L9.5 6.2" fill="none" stroke="#222" stroke-width="1.8"/></svg>
<div class="ht" style="top:419px">Scenes</div>
<div class="hdr" style="top:546px"></div>
<div class="hc" style="top:546px"></div>
<svg style="left:8px;top:551px" width="11" height="8" viewBox="0 0 11 8"><path d="M1.5 6.2 L5.5 2.2 L9.5 6.2" fill="none" stroke="#222" stroke-width="1.8"/></svg>
<div class="ht" style="top:546px">Sensors</div>
<div class="hdr" style="top:673px"></div>
<div class="hc" style="top:673px"></div>
<svg style="left:8px;top:678px" width="11" height="8" viewBox="0 0 11 8"><path d="M1.5 6.2 L5.5 2.2 L9.5 6.2" fill="none" stroke="#222" stroke-width="1.8"/></svg>
<div class="ht" style="top:673px">Rules</div>
<div class="hdr" style="top:816px"></div>
<div class="hc" style="top:816px"></div>
<svg style="left:8px;top:821px" width="11" height="8" viewBox="0 0 11 8"><path d="M1.5 6.2 L5.5 2.2 L9.5 6.2" fill="none" stroke="#222" stroke-width="1.8"/></svg>
<div class="ht" style="top:816px">Schedules</div>
<div class="tile" style="left:9px"></div>
<div class="il" style="left:50px;top:262px">PC 1</div>
<div class="tile" style="left:104px"></div>
<div class="il" style="left:145px;top:262px">PC 2</div>
<div class="tile" style="left:199px"></div>
<div class="il" style="left:240px;top:262px">Zithoek 1</div>
<div class="tile" style="left:294px"></div>
<div class="il" style="left:335px;top:262px">Zithoek 2</div>
<div class="tile" style="left:389px"></div>
<div class="il" style="left:430px;top:262px">Zithoek 3</div>
<div class="a" style="left:8px;top:317px;width:95px;height:94px;background:#f4f4f4;border:1px solid #d4d4d4"></div>
<div class="il" style="left:50px;top:389px">Dimmer 1.2</div>
<div class="il" style="left:145px;top:389px">PC</div>
<div class="il" style="left:240px;top:389px">Zithoek</div>
<div class="il" style="left:50px;top:516px">Helder</div>
<div class="il" style="left:145px;top:516px">Gedimd</div>
<div class="il" style="left:242px;top:516px">Nachtlampje</div>
<div class="il" style="left:335px;top:516px">Helder</div>
<div class="il" style="left:430px;top:516px">Gedimd</div>
<div class="t" style="left:493px;top:516px">Nachtlampje</div>
<div class="il" style="left:50px;top:643px">Daylight</div>
<div class="il" style="left:145px;top:643px">Dimmer 1.1</div>
<div class="t" style="left:19px;top:770px">Dimmer 2.2<br>Lichten</div>
<div class="t" style="left:114px;top:770px">Dimmer 2.4<br>Lichten</div>
<div class="t" style="left:209px;top:770px">Dimmer 2.3<br>Lichten</div>
<div class="t" style="left:304px;top:770px">Dimmer 2.3<br>Lichten</div>
<div class="t" style="left:399px;top:770px">Dimmer 2.2<br>Lichten</div>
<div class="t" style="left:494px;top:770px">Dimmer 2.2<br>Lichten</div>
<div class="t" style="left:589px;top:770px">Dimmer 2.1<br>Lichten</div>
<div class="t" style="left:684px;top:770px">Dimmer 2.3<br>Lichten</div>
<div class="a" style="left:15px;top:829px;width:210px;height:22px;background:rgba(228,238,252,.42)"></div>
<div class="t" style="left:47.5px;top:832px;color:#ebebee;font-size:11.6px">Vensterknipsel</div>
<div class="t" style="left:26px;top:913px">Aan 's<br>ochtends</div>
<div class="il" style="left:146px;top:921px">Uit 's avonds</div>
<svg style="left:33.5px;top:198.6px" width="34" height="60"><use href="#gl"/></svg>
<svg style="left:128.5px;top:198.6px" width="34" height="60"><use href="#gl"/></svg>
<svg style="left:225.5px;top:203.6px" width="29" height="50"><use href="#zb"/></svg>
<svg style="left:320.5px;top:203.6px" width="29" height="50"><use href="#zb"/></svg>
<svg style="left:415.5px;top:203.6px" width="29" height="50"><use href="#zb"/></svg>
<svg style="left:21px;top:329.5px" width="60" height="54"><use href="#g3"/></svg>
<svg style="left:116px;top:329.5px" width="60" height="54"><use href="#g3"/></svg>
<svg style="left:211px;top:329.5px" width="60" height="54"><use href="#g3"/></svg>
<svg style="left:15px;top:445px" width="75" height="70"><use href="#clap"/></svg>
<svg style="left:110px;top:445px" width="75" height="70"><use href="#clap"/></svg>
<svg style="left:207px;top:445px" width="75" height="70"><use href="#clap"/></svg>
<svg style="left:300px;top:445px" width="75" height="70"><use href="#clap"/></svg>
<svg style="left:395px;top:445px" width="75" height="70"><use href="#clap"/></svg>
<svg style="left:490px;top:445px" width="75" height="70"><use href="#clap"/></svg>
<svg style="left:20.8px;top:582.8px" width="58" height="58"><use href="#radar"/></svg>
<svg style="left:123.3px;top:580px" width="44.5" height="60"><use href="#dim"/></svg>
<svg style="left:23px;top:705px" width="52" height="63"><use href="#rule"/></svg>
<svg style="left:118px;top:705px" width="52" height="63"><use href="#rule"/></svg>
<svg style="left:213px;top:705px" width="52" height="63"><use href="#rule"/></svg>
<svg style="left:308px;top:705px" width="52" height="63"><use href="#rule"/></svg>
<svg style="left:403px;top:705px" width="52" height="63"><use href="#rule"/></svg>
<svg style="left:498px;top:705px" width="52" height="63"><use href="#rule"/></svg>
<svg style="left:593px;top:705px" width="52" height="63"><use href="#rule"/></svg>
<svg style="left:688px;top:705px" width="52" height="63"><use href="#rule"/></svg>
<svg style="left:19px;top:849px" width="62" height="61"><use href="#cal"/></svg>
<svg style="left:116px;top:857px" width="62" height="61"><use href="#cal"/></svg>
<!--/LEFTCONTENT-->
<!--RIGHT-->
<div class="a" id="right"></div>
<!--RIGHTCONTENT-->
<div class="sl" style="top:167px">Hue / Color</div>
<div class="bar" style="top:187px;background:linear-gradient(90deg,#f00 0,#f60 6%,#ff0 16.7%,#0f0 33.3%,#0ff 50%,#00f 66.7%,#f0f 83.3%,#f00 100%)"></div>
<div class="trk" style="left:1585px;top:194px;width:320px"></div>
<div class="thumb" style="left:1580px;top:187px"></div>
<div class="sl" style="top:224px">Brightness</div>
<div class="bar" style="top:244px;background:linear-gradient(90deg,#000,#fff)"></div>
<div class="trk" style="left:1585px;top:251px;width:320px"></div>
<div class="thumb" style="left:1899px;top:244px"></div>
<div class="sl" style="top:281px">Saturation</div>
<div class="bar" style="top:301px;background:linear-gradient(90deg,#fff,#f00)"></div>
<div class="trk" style="left:1585px;top:308px;width:320px"></div>
<div class="thumb" style="left:1580px;top:301px"></div>
<div class="div" style="top:335px"></div>
<div class="sl" style="top:346px">Color Temperature</div>
<div class="bar" style="top:366px;background:linear-gradient(90deg,#fff,#fbd9b0 30%,#ff8912)"></div>
<div class="trk" style="left:1585px;top:373px;width:320px"></div>
<div class="thumb" style="left:1580px;top:366px"></div>
<div class="div" style="top:399px"></div>
<div class="sl" style="top:410px">X Color Space</div>
<div class="trk" style="left:1585px;top:437px;width:280px"></div>
<div class="thumb" style="left:1580px;top:430px"></div>
<div class="sl" style="top:453px">Y Color Space</div>
<div class="trk" style="left:1585px;top:476px;width:280px"></div>
<div class="thumb" style="left:1580px;top:469px"></div>
<div class="a" style="left:1875px;top:441px;width:35px;height:43px;background:#2420ff;border:1px solid #000"></div>
<div class="div" style="top:504px"></div>
<div class="sl" style="top:513px">Transition Time : default</div>
<div class="trk" style="left:1585px;top:538px;width:320px"></div>
<div class="thumb" style="left:1580px;top:531px;border-color:#b4b4b4;background:#ececec"></div>
<div class="a" style="left:1570px;top:564px;width:350px;height:447px;border:1px solid #a5a8ad;border-top:1px solid #a5a8ad;background:#f0f8ff"></div>
<div class="t" style="left:1573px;top:568px">Properties</div>
<div class="a" style="left:1901px;top:570px;width:13px;height:13px;background:#fff"></div>
<svg style="left:1903px;top:574px" width="9" height="5" viewBox="0 0 9 5"><path d="M0 0H9L4.5 5Z" fill="#000"/></svg>
<div class="a" style="left:1573px;top:586px;width:344px;height:424px;border:1px solid #a5a8ad;background:#fff"></div>
<div class="a" style="left:1574px;top:587px;width:342px;height:181px;background:#f0f0f0"></div>
<div class="pr" style="top:605px;height:21px"></div>
<div class="pr" style="top:644px"></div>
<div class="pr" style="top:669px"></div>
<div class="pr" style="top:694px"></div>
<div class="pr" style="top:719px"></div>
<div class="pr" style="top:744px"></div>
<div class="a" style="left:1733px;top:605px;width:1px;height:20px;background:#f0f0f0"></div>
<div class="a" style="left:1733px;top:644px;width:1px;height:125px;background:#f0f0f0"></div>
<div class="t" style="left:1595px;top:589px;font-weight:bold">Action</div>
<div class="t" style="left:1595px;top:628px;font-weight:bold">Group Properties</div>
<svg style="left:1580px;top:593px" width="5.4" height="5.4" viewBox="0 0 6 6"><path d="M6 0V6H0Z" fill="#222"/></svg>
<svg style="left:1580px;top:632px" width="5.4" height="5.4" viewBox="0 0 6 6"><path d="M6 0V6H0Z" fill="#222"/></svg>
<svg style="left:1594px;top:611px" width="4" height="8" viewBox="0 0 4 8"><path d="M0 0L4 4L0 8Z" fill="#000"/></svg>
<div class="pn" style="top:608px">action</div>
<div class="pv" style="top:608px;left:1739px;width:177px;overflow:hidden">{"on":true,"bri":254,"alert":"none"}</div>
<div class="pn" style="top:649px">class</div>
<div class="pn" style="top:674px">modelid</div>
<div class="pn" style="top:699px">name</div>
<div class="pv" style="top:699px">Dimmer 1.2</div>
<div class="pn" style="top:724px">type</div>
<div class="pv" style="top:724px">LightGroup</div>
<div class="pn" style="top:749px">uniqueid</div>
<div class="a" style="left:1574px;top:962px;width:342px;height:3px;background:#ebebeb"></div>
<div class="a" style="left:1574px;top:965px;width:342px;height:44px;background:#dedede"></div>
<!--/RIGHTCONTENT-->
<!--STATUS-->
<div class="a" style="left:0;top:1012px;width:1920px;height:28px;background:#f1edec"></div>
<div class="t" style="left:9px;top:1019px">2</div>
<div class="a" style="left:1915px;top:985px;width:5px;height:42px;background:#000"></div>
<!--DIALOG-->
<div class="a" id="dlg"></div>
<!--DIALOGCONTENT-->
<svg style="left:519px;top:309px" width="16" height="14.4"><use href="#g3"/></svg>
<div class="t" style="left:540px;top:309px">Create a rule...</div>
<svg style="left:1388px;top:310px" width="11" height="11" viewBox="0 0 11 11"><path d="M0.5 0.5L10.5 10.5M10.5 0.5L0.5 10.5" stroke="#000" stroke-width="1.1" fill="none"/></svg>
<div class="t" style="left:526px;top:348px">Name :</div>
<div class="a" style="left:589px;top:345px;width:177px;height:26px;border:1px solid #f00;box-shadow:inset 0 0 0 1px #b4c3cc;background:#fff"></div>
<div class="t" style="left:594px;top:351px;color:#6d6d6d">newRule</div>
<div class="a" style="left:791px;top:352px;width:14px;height:14px;border:1px solid #333;background:#fff"></div>
<svg style="left:793px;top:354px" width="10" height="10" viewBox="0 0 10 10"><path d="M1 5.2L3.8 8L9 1.5" stroke="#111" stroke-width="1.6" fill="none"/></svg>
<div class="t" style="left:810px;top:351px">Enabled</div>
<div class="gb" style="left:513px;top:383px;width:363px;height:313px"></div>
<div class="gbl" style="left:517px;top:376px">Conditions</div>
<div class="gb" style="left:884px;top:351px;width:512px;height:345px"></div>
<div class="gbl" style="left:888px;top:344px">Actions</div>
<div class="t" style="left:525px;top:408px">Sensor :</div>
<div class="cb" style="left:589px;top:406px;width:140px"></div>
<svg style="left:715px;top:414px" width="8" height="5" viewBox="0 0 8 5"><path d="M0.8 0.8L4 4L7.2 0.8" stroke="#555" stroke-width="1" fill="none"/></svg>
<div class="cb" style="left:734px;top:406px;width:135px"></div>
<svg style="left:855px;top:414px" width="8" height="5" viewBox="0 0 8 5"><path d="M0.8 0.8L4 4L7.2 0.8" stroke="#555" stroke-width="1" fill="none"/></svg>
<div class="t" style="left:524px;top:435px">Operator :</div>
<div class="cb" style="left:589px;top:433px;width:140px"></div>
<svg style="left:715px;top:441px" width="8" height="5" viewBox="0 0 8 5"><path d="M0.8 0.8L4 4L7.2 0.8" stroke="#555" stroke-width="1" fill="none"/></svg>
<div class="t" style="left:525px;top:466px">Value :</div>
<div class="tb" style="left:589px;top:463px;width:201px;height:23px"></div>
<div class="btn" style="left:795px;top:463px;width:74px;height:23px">Add</div>
<div class="red" style="left:519px;top:490px;width:351px;height:199px"></div>
<div class="t" style="left:902px;top:378px">Type :</div>
<div class="t" style="left:902px;top:404px">Object :</div>
<div class="t" style="left:902px;top:432px">Property :</div>
<div class="t" style="left:902px;top:460px">Value :</div>
<div class="cb" style="left:963px;top:376px;width:200px"></div>
<svg style="left:1149px;top:384px" width="8" height="5" viewBox="0 0 8 5"><path d="M0.8 0.8L4 4L7.2 0.8" stroke="#555" stroke-width="1" fill="none"/></svg>
<div class="cb" style="left:963px;top:403px;width:200px"></div>
<svg style="left:1149px;top:411px" width="8" height="5" viewBox="0 0 8 5"><path d="M0.8 0.8L4 4L7.2 0.8" stroke="#555" stroke-width="1" fill="none"/></svg>
<div class="cb" style="left:963px;top:430px;width:200px"></div>
<svg style="left:1149px;top:438px" width="8" height="5" viewBox="0 0 8 5"><path d="M0.8 0.8L4 4L7.2 0.8" stroke="#555" stroke-width="1" fill="none"/></svg>
<div class="tb" style="left:963px;top:457px;width:142px;height:23px"></div>
<div class="btn" style="left:1110px;top:457px;width:53px;height:23px">Add</div>
<div class="tb" style="left:1168px;top:376px;width:218px;height:76px"></div>
<div class="btn" style="left:1168px;top:457px;width:218px;height:23px">Add Action</div>
<div class="red" style="left:897px;top:490px;width:490px;height:199px"></div>
<div class="t" style="left:526px;top:704px;line-height:13px">The maximum number of actions is 8 and the maximum number of conditions is 8.<br>The bridge can contain a maximum of 100 rules of 4 actions and 4 conditions.</div>
<div class="btn" style="left:1242px;top:702px;width:75px;height:20px;line-height:20px">Create</div>
<div class="btn" style="left:1322px;top:702px;width:75px;height:20px;line-height:20px;color:#000;background:#dedede;border-color:#6c6c6c">Done</div>
<!--/DIALOGCONTENT-->
</body>
</html>
